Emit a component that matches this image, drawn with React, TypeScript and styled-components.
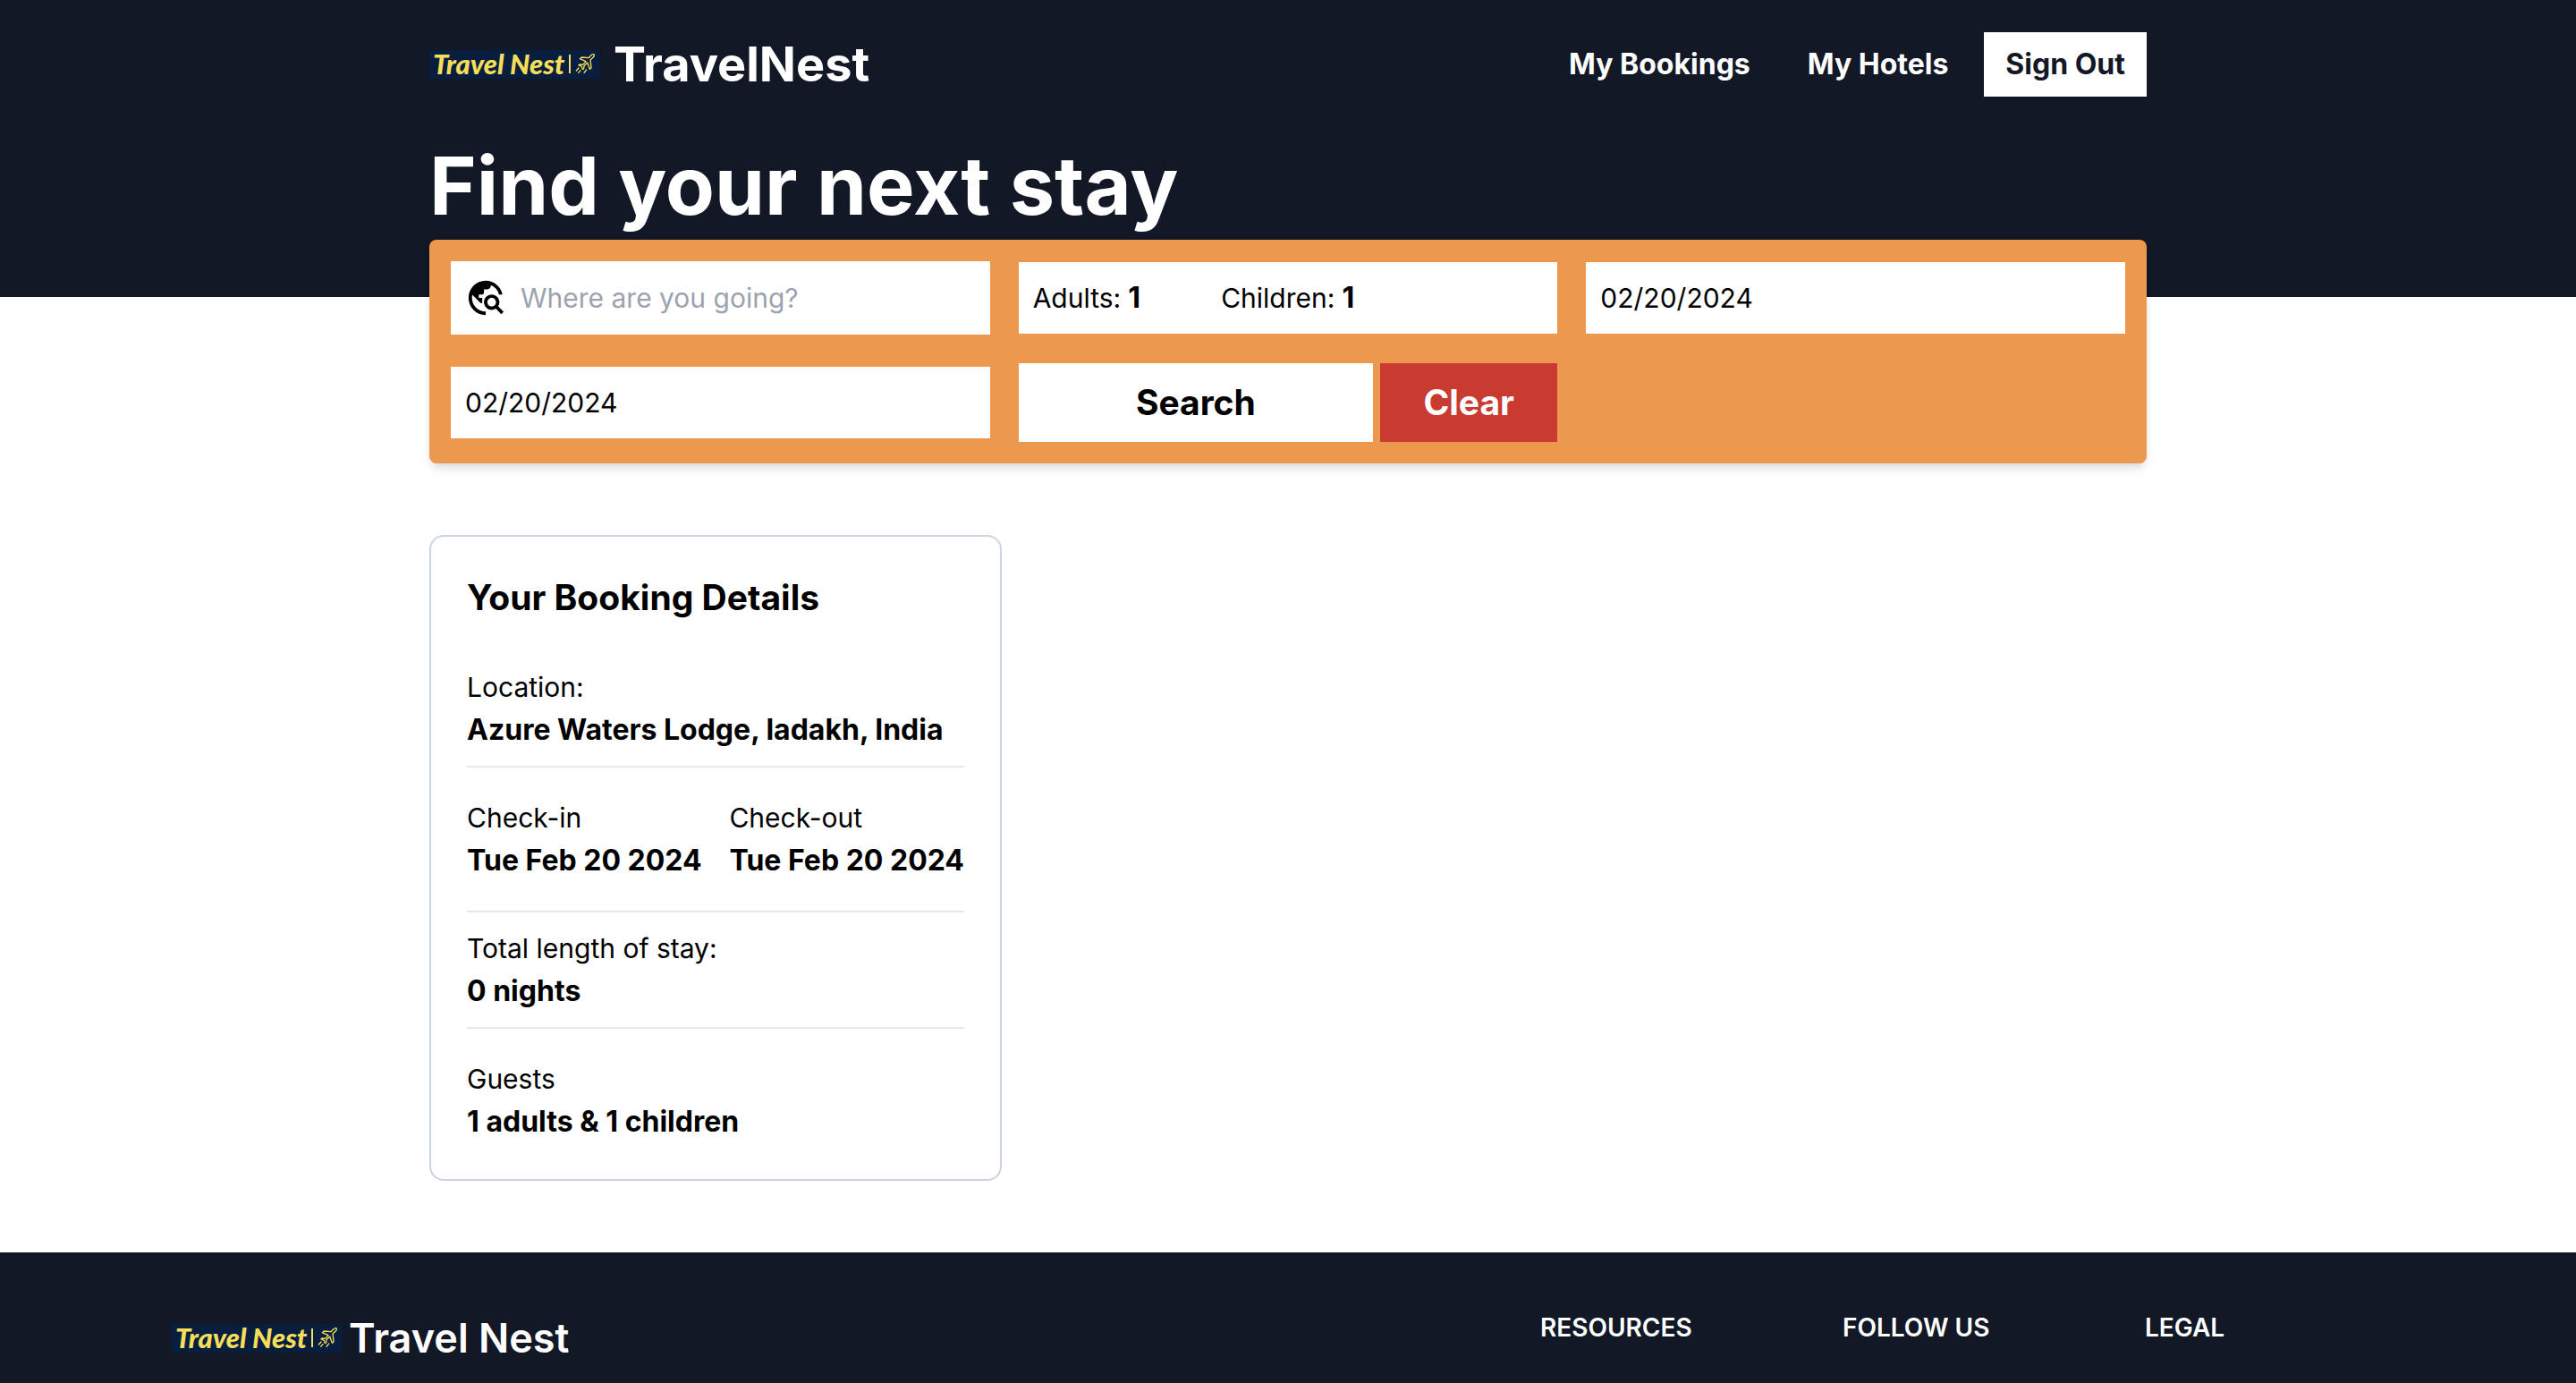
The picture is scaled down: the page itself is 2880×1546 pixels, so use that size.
import React, { useState } from "react";
import styled, { createGlobalStyle } from "styled-components";
import { MdTravelExplore } from "react-icons/md";

const navy = "#121826";
const orange = "#ec984f";
const red = "#c93a31";

const GlobalStyle = createGlobalStyle`
  *, *::before, *::after { box-sizing: border-box; }
  body {
    margin: 0;
    background: #fff;
    color: #000;
    font-family: Inter, "Liberation Sans", sans-serif;
    font-size: 30px;
    line-height: 48px;
  }
  h1, h2, p, dl, dt, dd { margin: 0; }
  button, input { font: inherit; color: inherit; border: 0; border-radius: 0; }
`;

const Page = styled.div`
  display: flex;
  flex-direction: column;
  min-height: 100vh;
`;

const Container = styled.div`
  width: 100%;
  max-width: 1920px;
  margin: 0 auto;
`;

const Header = styled.header`
  background: ${navy};
  color: #fff;
  padding: 36px 0 76px;
`;

const TopBar = styled.div`
  display: flex;
  align-items: center;
  justify-content: space-between;
`;

const BrandLink = styled.a<{ $gap: number }>`
  display: flex;
  align-items: center;
  gap: ${(p) => p.$gap}px;
  color: #fff;
  text-decoration: none;
`;

const BrandName = styled.span<{ $size: number; $weight: number }>`
  font-size: ${(p) => p.$size}px;
  line-height: 72px;
  font-weight: ${(p) => p.$weight};
`;

const LogoPlate = styled.span`
  display: flex;
  align-items: center;
  gap: 5px;
  width: 190px;
  height: 32px;
  padding: 0 0 2px 4px;
  background: #071e3e;
  color: #f6de5b;
  font-family: Lato, sans-serif;
  font-size: 31px;
  font-style: italic;
  font-weight: 900;
  line-height: 30px;
  white-space: nowrap;

  svg { flex: none; }
`;

const LogoBar = styled.span`
  flex: none;
  width: 2px;
  height: 21px;
  background: #f6de5b;
`;

const Nav = styled.nav`
  display: flex;
  align-items: center;
  gap: 16px;
  font-size: 32px;
`;

const NavLink = styled.a`
  padding: 12px 24px;
  color: #fff;
  font-weight: 700;
  text-decoration: none;
`;

const SignOutButton = styled.button`
  padding: 12px 24px;
  background: #fff;
  color: ${navy};
  font-weight: 700;
  cursor: pointer;
`;

const Headline = styled.h1`
  margin-top: 52px;
  font-size: 90px;
  line-height: 96px;
  font-weight: 700;
`;

const SearchForm = styled.form`
  position: relative;
  display: grid;
  grid-template-columns: repeat(3, minmax(0, 1fr));
  align-items: center;
  gap: 32px;
  margin-top: -64px;
  padding: 24px;
  border-radius: 8px;
  background: ${orange};
  box-shadow: 0 8px 12px -2px rgba(0, 0, 0, 0.1), 0 4px 8px -4px rgba(0, 0, 0, 0.1);
`;

const DestinationField = styled.label`
  display: flex;
  align-items: center;
  padding: 16px;
  background: #fff;

  svg {
    flex: none;
    width: 46px;
    height: 50px;
    margin-right: 16px;
  }
`;

const DestinationInput = styled.input`
  flex: 1;
  min-width: 0;
  padding: 0;
  background: transparent;
  outline: none;

  &::placeholder { color: #9ca3af; opacity: 1; }
`;

const GuestsField = styled.div`
  display: flex;
  gap: 16px;
  padding: 16px;
  background: #fff;
`;

const GuestLabel = styled.label`
  display: flex;
  align-items: center;
`;

const GuestInput = styled.input`
  width: 96px;
  padding: 0 8px;
  background: transparent;
  font-size: 32px;
  font-weight: 700;
  outline: none;
  appearance: textfield;

  &::-webkit-inner-spin-button { appearance: none; margin: 0; }
`;

const DateInput = styled.input`
  width: 100%;
  height: 80px;
  padding: 16px;
  background: #fff;
  outline: none;
`;

const FormActions = styled.div`
  display: grid;
  grid-template-columns: 2fr 1fr;
  gap: 8px;
`;

const ActionButton = styled.button<{ $danger?: boolean }>`
  padding: 16px;
  background: ${(p) => (p.$danger ? red : "#fff")};
  color: ${(p) => (p.$danger ? "#fff" : "#000")};
  font-size: 39px;
  line-height: 56px;
  font-weight: 700;
  cursor: pointer;
`;

const Main = styled.main`
  padding: 80px 0;
`;

const BookingGrid = styled.div`
  display: grid;
  grid-template-columns: 1fr 2fr;
`;

const DetailsCard = styled.section`
  padding: 40px;
  border: 2px solid #cbd5e1;
  border-radius: 16px;
`;

const CardTitle = styled.h2`
  margin-bottom: 48px;
  font-size: 39px;
  line-height: 56px;
  font-weight: 700;
`;

const DetailRow = styled.dl<{ $top: number; $bottom: number; $last?: boolean }>`
  display: flex;
  justify-content: space-between;
  padding: ${(p) => p.$top}px 0 ${(p) => p.$bottom}px;
  border-bottom: ${(p) => (p.$last ? "0" : "2px solid #e5e7eb")};
  white-space: nowrap;
`;

const DetailValue = styled.dd`
  font-size: 32px;
  font-weight: 700;
`;

const Footer = styled.footer`
  flex: 1;
  background: ${navy};
  color: #fff;
`;

const FooterInner = styled.div`
  display: flex;
  align-items: flex-start;
  justify-content: space-between;
  max-width: 2560px;
  margin: 0 auto;
  padding: 60px 32px 0;
`;

const FooterLinks = styled.div`
  display: grid;
  grid-template-columns: repeat(3, 290px);
  gap: 48px;
  padding-top: 4px;
`;

const FooterHeading = styled.h2`
  font-size: 28px;
  line-height: 40px;
  font-weight: 600;
  text-transform: uppercase;
`;

function Logo() {
  return (
    <LogoPlate>
      Travel Nest
      <LogoBar />
      <svg width="22" height="22" viewBox="0 0 66 66" fill="none" stroke="#f6de5b" strokeWidth="4" strokeLinejoin="round" strokeLinecap="round" aria-hidden="true">
        <path d="M64 3C61 1 56 3 52 7L45 14 22 12 16 17 36 26 26 37 15 36 12 39 22 43 25 53 29 50 30 41 41 30 49 52 54 47 51 21 60 13C63 10 65 7 64 3Z" />
        <path d="M12 48 4 57M18 56 11 64M38 54 30 64" />
      </svg>
    </LogoPlate>
  );
}

type Detail = { label: string; value: string };

function Details({ items, top, bottom, last }: { items: Detail[]; top: number; bottom: number; last?: boolean }) {
  return (
    <DetailRow $top={top} $bottom={bottom} $last={last}>
      {items.map((item) => (
        <div key={item.label}>
          <dt>{item.label}</dt>
          <DetailValue>{item.value}</DetailValue>
        </div>
      ))}
    </DetailRow>
  );
}

export default function App() {
  const [destination, setDestination] = useState("");
  const [adults, setAdults] = useState("1");
  const [children, setChildren] = useState("1");
  const [checkIn, setCheckIn] = useState("02/20/2024");
  const [checkOut, setCheckOut] = useState("02/20/2024");

  return (
    <Page>
      <GlobalStyle />
      <Header>
        <Container>
          <TopBar>
            <BrandLink href="#" $gap={16}>
              <Logo />
              <BrandName $size={54} $weight={700}>TravelNest</BrandName>
            </BrandLink>
            <Nav>
              <NavLink href="#bookings">My Bookings</NavLink>
              <NavLink href="#hotels">My Hotels</NavLink>
              <SignOutButton type="button">Sign Out</SignOutButton>
            </Nav>
          </TopBar>
          <Headline>Find your next stay</Headline>
        </Container>
      </Header>

      <Container>
        <SearchForm onSubmit={(e) => e.preventDefault()}>
          <DestinationField>
            <MdTravelExplore aria-hidden="true" />
            <DestinationInput
              aria-label="Destination"
              placeholder="Where are you going?"
              value={destination}
              onChange={(e) => setDestination(e.target.value)}
            />
          </DestinationField>
          <GuestsField>
            <GuestLabel>
              Adults:
              <GuestInput type="number" min={1} max={20} value={adults} onChange={(e) => setAdults(e.target.value)} />
            </GuestLabel>
            <GuestLabel>
              Children:
              <GuestInput type="number" min={0} max={20} value={children} onChange={(e) => setChildren(e.target.value)} />
            </GuestLabel>
          </GuestsField>
          <DateInput aria-label="Check-in date" value={checkIn} onChange={(e) => setCheckIn(e.target.value)} />
          <DateInput aria-label="Check-out date" value={checkOut} onChange={(e) => setCheckOut(e.target.value)} />
          <FormActions>
            <ActionButton type="submit">Search</ActionButton>
            <ActionButton type="button" $danger onClick={() => setDestination("")}>Clear</ActionButton>
          </FormActions>
        </SearchForm>

        <Main>
          <BookingGrid>
            <DetailsCard>
              <CardTitle>Your Booking Details</CardTitle>
              <Details top={0} bottom={16} items={[{ label: "Location:", value: "Azure Waters Lodge, ladakh, India" }]} />
              <Details
                top={32}
                bottom={32}
                items={[
                  { label: "Check-in", value: "Tue Feb 20 2024" },
                  { label: "Check-out", value: "Tue Feb 20 2024" },
                ]}
              />
              <Details top={16} bottom={16} items={[{ label: "Total length of stay:", value: "0 nights" }]} />
              <Details top={32} bottom={0} last items={[{ label: "Guests", value: "1 adults & 1 children" }]} />
            </DetailsCard>
          </BookingGrid>
        </Main>
      </Container>

      <Footer>
        <FooterInner>
          <BrandLink href="#" $gap={8}>
            <Logo />
            <BrandName $size={45} $weight={600}>Travel Nest</BrandName>
          </BrandLink>
          <FooterLinks>
            <FooterHeading>Resources</FooterHeading>
            <FooterHeading>Follow us</FooterHeading>
            <FooterHeading>Legal</FooterHeading>
          </FooterLinks>
        </FooterInner>
      </Footer>
    </Page>
  );
}
